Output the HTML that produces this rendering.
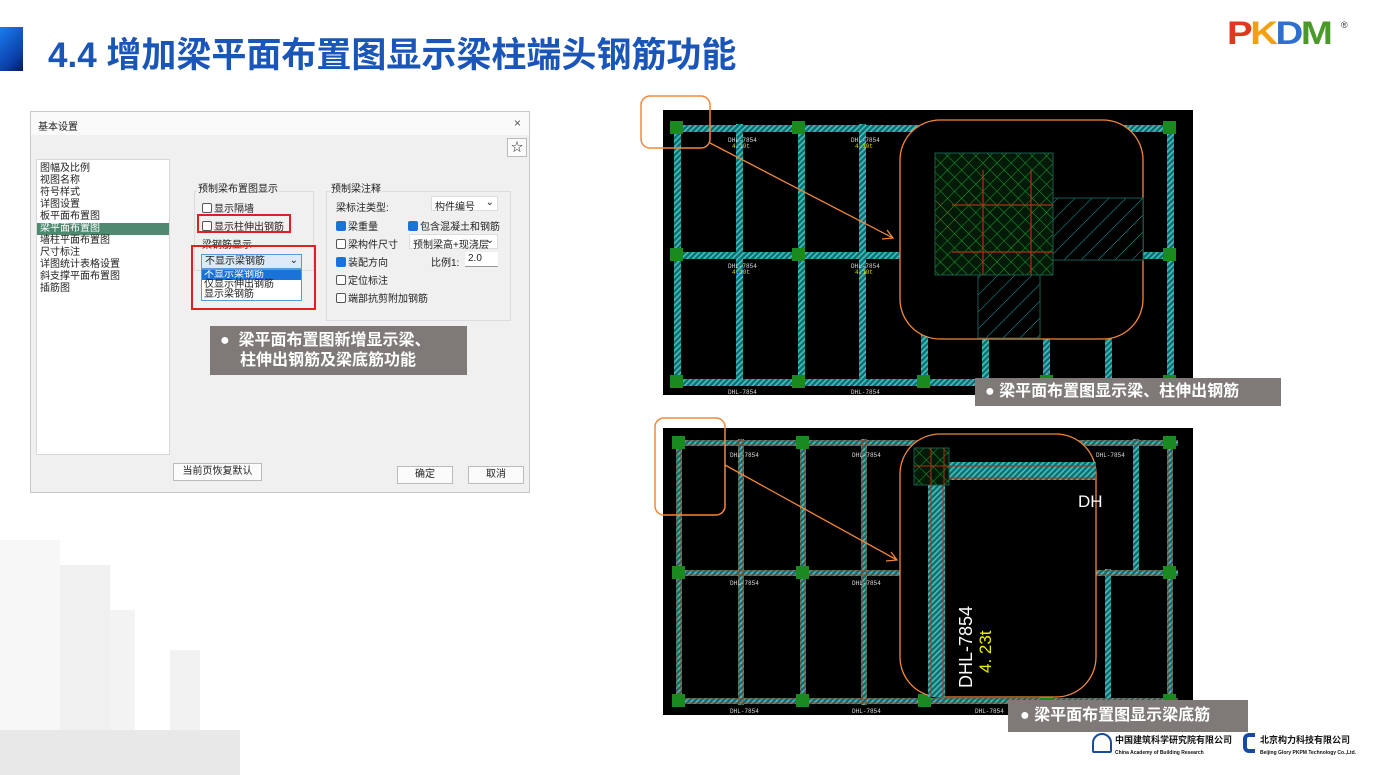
<!DOCTYPE html>
<html><head><meta charset="utf-8"><style>
*{margin:0;padding:0;box-sizing:border-box}
body{width:1376px;height:775px;background:#fff;position:relative;overflow:hidden;font-family:"Liberation Sans","Noto Sans CJK SC",sans-serif}
.abs{position:absolute}
.dlg{left:30px;top:111px;width:500px;height:382px;background:#f0f0f0;border:1px solid #c8c8c8;font-size:10px;color:#222}
.dlg .tb{position:absolute;left:0;top:0;right:0;height:23px;background:#fafafa;padding:6px 0 0 7px}
.list{position:absolute;left:5px;top:47px;width:134px;height:296px;background:#fff;border:1px solid #d8d8d8;padding-top:3px}
.list div{height:12px;line-height:12px;padding-left:3px;font-size:10px}
.list .sel{background:#4e8a70;color:#fff}
.cb{display:inline-block;width:10px;height:10px;border:1px solid #555;border-radius:2px;vertical-align:-1px;margin-right:2px;background:#fff}
.cb.on{background:#1a73d9;border-color:#1a73d9}
.grp{position:absolute;border:1px solid #dcdcdc}
.btn{position:absolute;background:#fbfbfb;border:1px solid #bbb;text-align:center;font-size:10px;line-height:16px}
.cap{background:#7f7a78;color:#fff;font-weight:bold}
</style></head><body>

<div class="abs" style="left:0;top:27px;width:23px;height:44px;background:linear-gradient(135deg,#1a7cf0,#0a3ea8 70%,#061a5a)"></div>
<div class="abs" style="left:48px;top:27px;font-size:35px;font-weight:bold;color:#1a55b8;white-space:nowrap">4.4 增加梁平面布置图显示梁柱端头钢筋功能</div>

<div class="abs" style="left:1227px;top:15px;font-size:32px;font-weight:900;letter-spacing:-2px;white-space:nowrap;transform:scaleX(1.2);transform-origin:left"><span style="color:#e0381c">P</span><span style="color:#f0a010">K</span><span style="color:#2f6fd0">D</span><span style="color:#4a9a2a">M</span></div>
<div class="abs" style="left:1341px;top:20px;font-size:9px;color:#333">®</div>

<svg class="abs" style="left:0;top:530px" width="240" height="245" opacity=".55">
<rect x="60" y="35" width="50" height="210" fill="#e4e4e4"/>
<rect x="110" y="80" width="25" height="165" fill="#ebebeb"/>
<rect x="170" y="120" width="30" height="125" fill="#e8e8e8"/>
<rect x="0" y="10" width="60" height="235" fill="#f2f2f2"/>
<rect x="0" y="200" width="240" height="45" fill="#d6d6d6"/>
</svg>

<div class="abs dlg">
<div class="tb">基本设置<span style="position:absolute;right:8px;top:4px;font-size:12px;color:#555">×</span></div>
<div class="btn" style="left:476px;top:26px;width:20px;height:19px;line-height:17px;font-size:12px">☆</div>
<div class="list">
<div>图幅及比例</div><div>视图名称</div><div>符号样式</div><div>详图设置</div><div>板平面布置图</div><div class="sel">梁平面布置图</div><div>墙柱平面布置图</div><div>尺寸标注</div><div>详图统计表格设置</div><div>斜支撑平面布置图</div><div>插筋图</div>
</div>
<div class="grp" style="left:163px;top:79px;width:120px;height:80px"></div>
<div class="abs" style="left:166px;top:68px;background:#f0f0f0;padding:0 1px">预制梁布置图显示</div>
<div class="abs" style="left:171px;top:88px"><span class="cb"></span>显示隔墙</div>
<div class="abs" style="left:171px;top:106px"><span class="cb"></span>显示柱伸出钢筋</div>
<div class="abs" style="left:166px;top:102px;width:94px;height:19px;border:2px solid #e02020"></div>
<div class="abs" style="left:171px;top:124px;background:#f0f0f0">梁钢筋显示</div>
<div class="abs" style="left:170px;top:142px;width:101px;height:15px;border:1px solid #5a9ad8;background:#dce9f7;padding:1px 0 0 3px;line-height:12px">不显示梁钢筋<span style="position:absolute;right:3px;top:0">⌄</span></div>
<div class="abs" style="left:170px;top:157px;width:101px;height:32px;border:1px solid #5a9ad8;background:#fff;line-height:10px;font-size:10px;overflow:hidden">
<div style="background:#1a73d9;color:#fff;padding-left:2px">不显示梁钢筋</div><div style="padding-left:2px">仅显示伸出钢筋</div><div style="padding-left:2px">显示梁钢筋</div></div>
<div class="abs" style="left:160px;top:133px;width:125px;height:65px;border:2px solid #e02020"></div>
<div class="grp" style="left:295px;top:79px;width:185px;height:130px"></div>
<div class="abs" style="left:299px;top:68px;background:#f0f0f0;padding:0 1px">预制梁注释</div>
<div class="abs" style="left:305px;top:87px">梁标注类型:</div>
<div class="abs" style="left:400px;top:84px;width:67px;height:15px;background:#fff;border:1px solid #ddd;padding:1px 0 0 3px">构件编号<span style="position:absolute;right:3px;top:0">⌄</span></div>
<div class="abs" style="left:305px;top:106px"><span class="cb on"></span>梁重量</div>
<div class="abs" style="left:377px;top:106px"><span class="cb on"></span>包含混凝土和钢筋</div>
<div class="abs" style="left:305px;top:124px"><span class="cb"></span>梁构件尺寸</div>
<div class="abs" style="left:378px;top:122px;width:89px;height:15px;background:#fff;border:1px solid #ddd;padding:1px 0 0 3px">预制梁高+现浇层<span style="position:absolute;right:3px;top:0">⌄</span></div>
<div class="abs" style="left:305px;top:142px"><span class="cb on"></span>装配方向</div>
<div class="abs" style="left:400px;top:142px">比例1:</div>
<div class="abs" style="left:434px;top:140px;width:33px;height:15px;background:#fff;border-bottom:1px solid #999;padding:1px 0 0 3px">2.0</div>
<div class="abs" style="left:305px;top:160px"><span class="cb"></span>定位标注</div>
<div class="abs" style="left:305px;top:178px"><span class="cb"></span>端部抗剪附加钢筋</div>
<div class="btn" style="left:142px;top:351px;width:89px;height:18px">当前页恢复默认</div>
<div class="btn" style="left:366px;top:354px;width:56px;height:18px">确定</div>
<div class="btn" style="left:437px;top:354px;width:56px;height:18px">取消</div>
<div class="abs cap" style="left:179px;top:214px;width:257px;height:49px;font-size:16px;line-height:20px;padding:5px 0 0 10px">●&nbsp; 梁平面布置图新增显示梁、<br><span style="padding-left:20px">柱伸出钢筋及梁底筋功能</span></div>
</div>

<svg class="abs" style="left:0;top:0" width="1376" height="775">
<defs>
<pattern id="h" width="4" height="4" patternUnits="userSpaceOnUse" patternTransform="rotate(45)"><rect width="4" height="4" fill="#0e6e70"/><rect width="1.6" height="4" fill="#44c0c0"/></pattern>
<pattern id="x" width="10" height="10" patternUnits="userSpaceOnUse" patternTransform="rotate(45)"><rect width="10" height="10" fill="#031a08"/><path d="M0 0V10M0 0H10" stroke="#1ea030" stroke-width="1"/></pattern>
<pattern id="d" width="12" height="12" patternUnits="userSpaceOnUse" patternTransform="rotate(45)"><rect width="12" height="12" fill="#000"/><path d="M0 0V12" stroke="#1aa0a0" stroke-width="1"/></pattern>
</defs>
<rect x="663" y="110" width="530" height="285" fill="#000"/>
<g fill="url(#h)">
<rect x="670" y="125" width="506" height="7"/><rect x="670" y="252" width="506" height="7"/><rect x="670" y="379" width="506" height="7"/>
<rect x="674" y="124" width="7" height="262"/><rect x="736" y="124" width="7" height="262"/><rect x="798" y="124" width="7" height="262"/><rect x="859" y="124" width="7" height="262"/><rect x="921" y="259" width="7" height="127"/><rect x="982" y="259" width="7" height="127"/><rect x="1043" y="259" width="7" height="127"/><rect x="1105" y="259" width="7" height="127"/><rect x="1167" y="124" width="7" height="262"/>
</g>
<g fill="#1a8a20">
<rect x="670" y="121" width="13" height="13"/><rect x="792" y="121" width="13" height="13"/><rect x="1163" y="121" width="13" height="13"/>
<rect x="670" y="248" width="13" height="13"/><rect x="792" y="248" width="13" height="13"/><rect x="1163" y="248" width="13" height="13"/>
<rect x="670" y="375" width="13" height="13"/><rect x="792" y="375" width="13" height="13"/><rect x="917" y="375" width="13" height="13"/><rect x="1040" y="375" width="13" height="13"/><rect x="1163" y="375" width="13" height="13"/>
</g>
<g fill="#ddd" font-size="6" font-family="Liberation Mono">
<text x="728" y="142">DHL-7854</text><text x="851" y="142">DHL-7854</text><text x="728" y="268">DHL-7854</text><text x="851" y="268">DHL-7854</text><text x="728" y="394">DHL-7854</text><text x="851" y="394">DHL-7854</text>
</g>
<g fill="#dd0" font-size="6" font-family="Liberation Mono"><text x="732" y="148">4.10t</text><text x="855" y="148">4.10t</text><text x="732" y="274">4.10t</text><text x="855" y="274">4.10t</text></g>
<rect x="900" y="120" width="243" height="219" rx="40" fill="#000" stroke="#f0883a" stroke-width="1.3"/>
<rect x="935" y="153" width="118" height="122" fill="url(#x)" stroke="#1a5a50"/>
<rect x="1053" y="198" width="90" height="62" fill="url(#d)" stroke="#1a5a50"/>
<rect x="978" y="275" width="62" height="63" fill="url(#d)" stroke="#1a5a50"/>
<g stroke="#b03010" stroke-width="1.2"><path d="M952 205H1053M952 252H1053M983 170V275M1031 170V275"/></g>
<rect x="641" y="96" width="69" height="52" rx="9" fill="none" stroke="#f0883a" stroke-width="1.5"/>
<path d="M710 143L893 238M882 239L893 238L887 230" stroke="#f0883a" stroke-width="1.3" fill="none"/>

<rect x="663" y="428" width="530" height="287" fill="#000"/>
<g fill="url(#h)">
<rect x="672" y="440" width="506" height="6"/><rect x="672" y="570" width="506" height="6"/><rect x="672" y="698" width="506" height="6"/>
<rect x="676" y="439" width="6" height="266"/><rect x="738" y="439" width="6" height="266"/><rect x="800" y="439" width="6" height="266"/><rect x="861" y="439" width="6" height="266"/><rect x="1105" y="569" width="6" height="136"/><rect x="1133" y="439" width="6" height="136"/><rect x="1167" y="439" width="6" height="266"/>
</g>
<g stroke="#b03010" stroke-width=".8" fill="none"><path d="M672 441H1178M672 445H1178M672 571H1178M672 575H1178M672 699H1178M672 703H1178M677 439V705M681 439V705M739 439V705M743 439V705M801 439V705M805 439V705M862 439V705M866 439V705M1168 439V705M1172 439V705"/></g>
<g fill="#1a8a20">
<rect x="672" y="436" width="13" height="13"/><rect x="796" y="436" width="13" height="13"/><rect x="1163" y="436" width="13" height="13"/>
<rect x="672" y="566" width="13" height="13"/><rect x="796" y="566" width="13" height="13"/><rect x="1163" y="566" width="13" height="13"/>
<rect x="672" y="694" width="13" height="13"/><rect x="796" y="694" width="13" height="13"/><rect x="918" y="694" width="13" height="13"/><rect x="1040" y="694" width="13" height="13"/><rect x="1163" y="694" width="13" height="13"/>
</g>
<g fill="#ddd" font-size="6" font-family="Liberation Mono"><text x="730" y="457">DHL-7854</text><text x="852" y="457">DHL-7854</text><text x="1096" y="457">DHL-7854</text><text x="730" y="585">DHL-7854</text><text x="852" y="585">DHL-7854</text><text x="730" y="713">DHL-7854</text><text x="852" y="713">DHL-7854</text><text x="975" y="713">DHL-7854</text></g>
<rect x="900" y="434" width="196" height="263" rx="40" fill="#000" stroke="#f0883a" stroke-width="1.3"/>
<rect x="949" y="462" width="147" height="18" fill="url(#h)"/>
<rect x="928" y="485" width="17" height="212" fill="url(#h)"/>
<rect x="914" y="448" width="35" height="37" fill="url(#x)" stroke="#1a5a50"/>
<g stroke="#b03010" stroke-width="1"><path d="M914 466H1096M949 478H1096M931 448V697M943 485V697M944 448V485"/></g>
<text transform="translate(972 688) rotate(-90)" fill="#fff" font-size="18" font-family="Liberation Sans Narrow,Liberation Sans">DHL-7854</text>
<text transform="translate(991 673) rotate(-90)" fill="#ee0" font-size="17" font-family="Liberation Sans Narrow,Liberation Sans">4. 23t</text>
<text x="1078" y="507" fill="#fff" font-size="17">DH</text>
<rect x="655" y="418" width="70" height="97" rx="9" fill="none" stroke="#f0883a" stroke-width="1.5"/>
<path d="M725 465L897 560M886 561L897 560L891 552" stroke="#f0883a" stroke-width="1.3" fill="none"/>
</svg>

<div class="abs cap" style="left:975px;top:378px;width:306px;height:28px;font-size:16px;line-height:28px;padding-left:10px">● 梁平面布置图显示梁、柱伸出钢筋</div>
<div class="abs cap" style="left:1008px;top:700px;width:240px;height:32px;font-size:16px;line-height:32px;padding-left:12px">● 梁平面布置图显示梁底筋</div>

<div class="abs" style="left:1092px;top:733px;width:20px;height:20px;border:2px solid #1a4a9a;border-radius:50% 50% 2px 2px"></div>
<div class="abs" style="left:1115px;top:733px;font-size:9px;color:#111;white-space:nowrap;font-weight:bold">中国建筑科学研究院有限公司<br><span style="font-size:5px">China Academy of Building Research</span></div>
<div class="abs" style="left:1243px;top:733px;width:12px;height:20px;border:4px solid #1a4aa0;border-right:none;border-radius:6px 0 0 6px"></div>
<div class="abs" style="left:1260px;top:733px;font-size:9px;color:#111;white-space:nowrap;font-weight:bold">北京构力科技有限公司<br><span style="font-size:5px">Beijing Glory PKPM Technology Co.,Ltd.</span></div>
</body></html>
